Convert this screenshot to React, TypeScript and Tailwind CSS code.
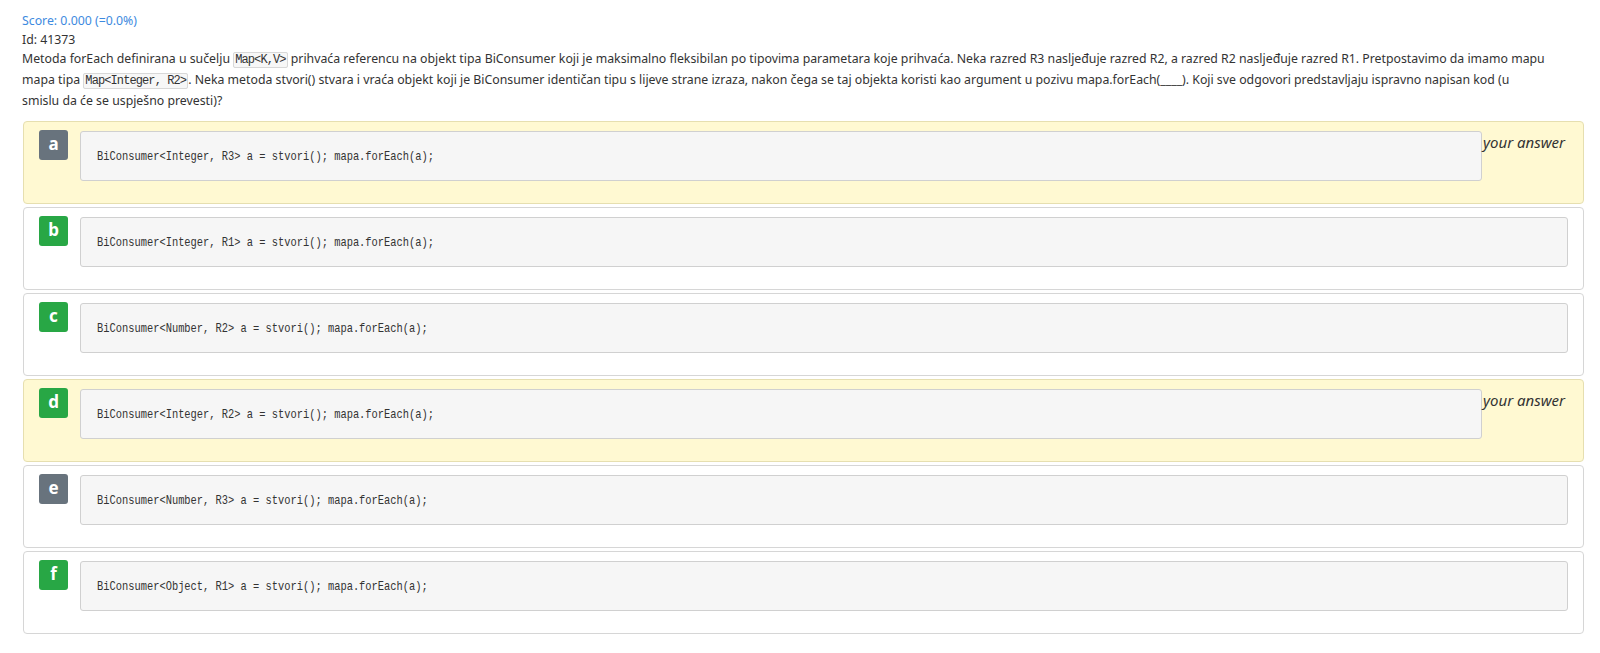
import React from "react";

type Opt = { l: string; code: string; yellow: boolean; green: boolean };

const opts: Opt[] = [
  { l: "a", code: "BiConsumer<Integer, R3> a = stvori(); mapa.forEach(a);", yellow: true, green: false },
  { l: "b", code: "BiConsumer<Integer, R1> a = stvori(); mapa.forEach(a);", yellow: false, green: true },
  { l: "c", code: "BiConsumer<Number, R2> a = stvori(); mapa.forEach(a);", yellow: false, green: true },
  { l: "d", code: "BiConsumer<Integer, R2> a = stvori(); mapa.forEach(a);", yellow: true, green: true },
  { l: "e", code: "BiConsumer<Number, R3> a = stvori(); mapa.forEach(a);", yellow: false, green: false },
  { l: "f", code: "BiConsumer<Object, R1> a = stvori(); mapa.forEach(a);", yellow: false, green: true },
];

function InlineCode({ children }: { children: React.ReactNode }) {
  return (
    <code className="px-[1px] bg-[#f7f7f7] border border-[#d8d8d8] rounded-[2px] text-[12px] tracking-[-0.9px] text-[#333] font-['Liberation_Mono',monospace]">
      {children}
    </code>
  );
}

export default function App() {
  return (
    <div className="bg-white min-h-[653px] pl-[22px] pr-[16px] pt-[11px] text-[#333] font-['Noto_Sans',sans-serif] text-[12.3px] leading-[19px]">
      <div className="text-[#3d8ae0]">Score: 0.000 (=0.0%)</div>
      <div>Id: 41373</div>
      <div className="whitespace-nowrap">
        Metoda forEach definirana u sučelju <InlineCode>Map&lt;K,V&gt;</InlineCode> prihvaća referencu na objekt tipa BiConsumer koji je maksimalno fleksibilan po tipovima parametara koje prihvaća. Neka razred R3 nasljeđuje razred R2, a razred R2 nasljeđuje razred R1. Pretpostavimo da imamo mapu
        <br />
        mapa tipa <InlineCode>Map&lt;Integer, R2&gt;</InlineCode>. Neka metoda stvori() stvara i vraća objekt koji je BiConsumer identičan tipu s lijeve strane izraza, nakon čega se taj objekta koristi kao argument u pozivu mapa.forEach(____). Koji sve odgovori predstavljaju ispravno napisan kod (u
        <br />
        smislu da će se uspješno prevesti)?
      </div>
      <div className="mt-[11px] ml-[1px] flex flex-col gap-[3px]">
        {opts.map((o) => (
          <div
            key={o.l}
            className={
              "h-[83px] rounded-[4px] border flex items-start pl-[15px] pr-[15px] pt-[8px] " +
              (o.yellow ? "bg-[#fff9d2] border-[#e6dfb0]" : "bg-white border-[#d6d6d6]")
            }
          >
            <div
              className={
                "w-[29px] h-[30px] rounded-[3px] flex items-center justify-center text-white font-bold text-[17px] leading-none pb-[3px] shrink-0 " +
                (o.green ? "bg-[#28a745]" : "bg-[#68737d]")
              }
            >
              {o.l}
            </div>
            <div className="ml-[12px] mt-[1px] flex-1 h-[50px] bg-[#f6f6f6] border border-[#d0d0d0] rounded-[3px] flex items-center pl-[16px] overflow-hidden">
              <span className="inline-block origin-left scale-x-[0.8] text-[13px] text-[#333] whitespace-pre font-['Liberation_Mono',monospace]">
                {o.code}
              </span>
            </div>
            {o.yellow && (
              <div className="w-[86px] shrink-0 italic text-[15px] leading-[20px] mt-[2px] pl-[1px] text-[#333] whitespace-nowrap">
                your answer
              </div>
            )}
          </div>
        ))}
      </div>
    </div>
  );
}
